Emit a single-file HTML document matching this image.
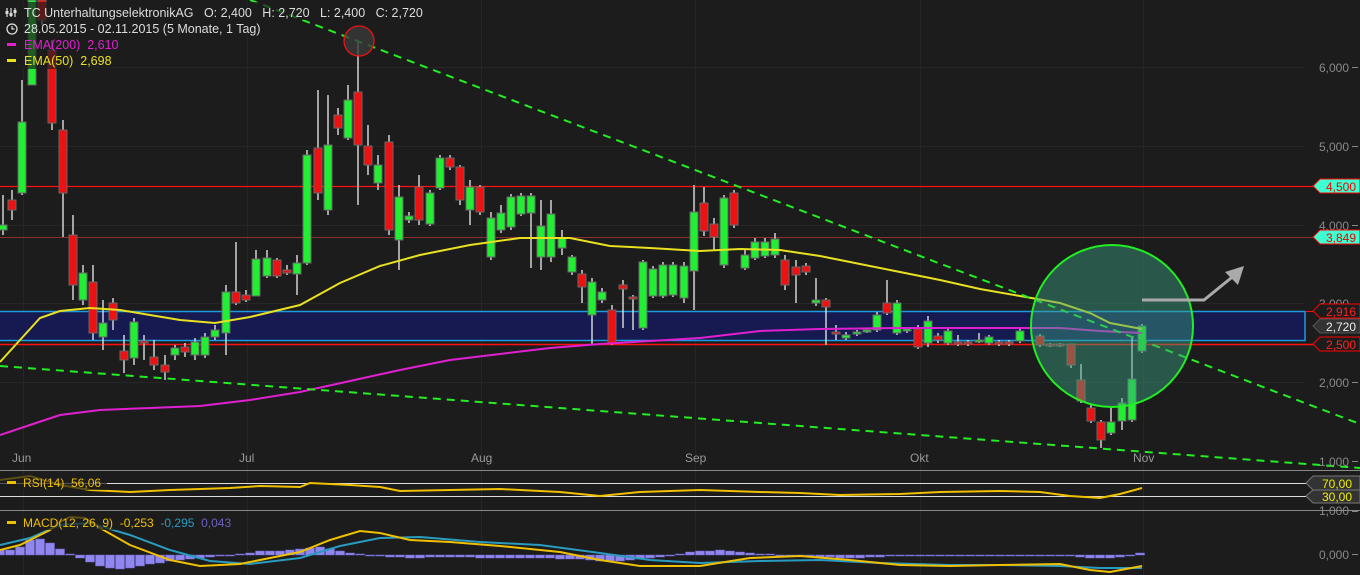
<!DOCTYPE html>
<html><head><meta charset="utf-8"><style>
html,body{margin:0;padding:0;background:#1c1c1c;width:1360px;height:575px;overflow:hidden}
svg{display:block;font-family:"Liberation Sans",sans-serif}
text{white-space:pre}
</style></head><body>
<svg id="s" width="1360" height="575" viewBox="0 0 1360 575" xmlns="http://www.w3.org/2000/svg" xml:space="preserve">
<rect width="1360" height="575" fill="#1c1c1c"/>
<g stroke="#262626" stroke-width="1">
<line x1="0" y1="67.5" x2="1305" y2="67.5"/><line x1="0" y1="146.5" x2="1305" y2="146.5"/><line x1="0" y1="225.5" x2="1305" y2="225.5"/><line x1="0" y1="303.5" x2="1305" y2="303.5"/><line x1="0" y1="382.5" x2="1305" y2="382.5"/>
<line x1="23.5" y1="0" x2="23.5" y2="575"/><line x1="247.5" y1="0" x2="247.5" y2="575"/><line x1="481.5" y1="0" x2="481.5" y2="575"/><line x1="695.5" y1="0" x2="695.5" y2="575"/><line x1="920.5" y1="0" x2="920.5" y2="575"/><line x1="1143.5" y1="0" x2="1143.5" y2="575"/>
</g>
<rect x="-1" y="311.5" width="1306" height="29" fill="#161a50" stroke="#1e9be0" stroke-width="1.5"/>
<line x1="0" y1="186.5" x2="1315" y2="186.5" stroke="#ff1010" stroke-width="1.2"/>
<line x1="0" y1="237.5" x2="1315" y2="237.5" stroke="#8a3030" stroke-width="1"/>
<line x1="0" y1="344.5" x2="1315" y2="344.5" stroke="#ff1010" stroke-width="1.5"/>
<line x1="1305" y1="311.5" x2="1315" y2="311.5" stroke="#ff1010"/>
<g id="candles"></g>
<polyline fill="none" stroke="#e8e020" stroke-width="2" points="0,362 20,340 40,318 60,311 90,308 120,310 150,315 180,320 215,323 250,317 300,305 340,283 380,266 420,255 470,245 520,238 570,238 610,246 650,248 700,251 740,249 780,250 820,256 860,264 900,272 940,280 980,289 1020,296 1060,303 1090,313 1110,323 1142,329"/>
<polyline fill="none" stroke="#e020d0" stroke-width="2" points="0,435 30,425 60,415 100,410 150,408 200,406 250,400 300,392 350,381 400,370 450,360 500,354 550,348 600,344 650,341 700,338 760,331 820,329 900,328 1000,328 1060,328 1100,331 1142,333"/>
<line x1="250" y1="0" x2="1360" y2="424" stroke="#22ee22" stroke-width="2" stroke-dasharray="8,6"/>
<line x1="0" y1="366" x2="1360" y2="468" stroke="#22ee22" stroke-width="2" stroke-dasharray="8,6"/>
<circle cx="359" cy="41" r="15" fill="#3a3a3a" fill-opacity="0.8" stroke="#ee1111" stroke-width="1.3"/>
<circle cx="1112" cy="326" r="81" fill="#3aa080" fill-opacity="0.45" stroke="#22ee22" stroke-width="2"/>
<polyline points="1142,300 1204,300 1236,274" fill="none" stroke="#aaa" stroke-width="3"/>
<polygon points="1244,266 1225,272 1238,285" fill="#aaa"/>
<g fill="#888" font-size="12" text-anchor="end">
<text x="1349" y="72">6,000</text><text x="1349" y="151">5,000</text><text x="1349" y="230">4,000</text><text x="1349" y="308">3,000</text><text x="1349" y="387">2,000</text><text x="1349" y="466">1,000</text>
<text x="1349" y="515">1,000</text><text x="1349" y="559">0,000</text>
</g>
<g stroke="#888"><line x1="1352" y1="67.5" x2="1358" y2="67.5"/><line x1="1352" y1="146.5" x2="1358" y2="146.5"/><line x1="1352" y1="225.5" x2="1358" y2="225.5"/><line x1="1352" y1="382.5" x2="1358" y2="382.5"/><line x1="1352" y1="461.5" x2="1358" y2="461.5"/><line x1="1352" y1="511.5" x2="1358" y2="511.5"/><line x1="1352" y1="554.5" x2="1358" y2="554.5"/></g>
<g fill="#999" font-size="12"><text x="12" y="462">Jun</text><text x="239" y="462">Jul</text><text x="471" y="462">Aug</text><text x="685" y="462">Sep</text><text x="910" y="462">Okt</text><text x="1133" y="462">Nov</text></g>
<g font-size="12" text-anchor="end">
<polygon points="1313,186 1320,179 1360,179 1360,193 1320,193" fill="#40ffd0" stroke="#f00"/><text x="1356" y="191" fill="#e00">4,500</text>
<polygon points="1313,237 1320,230 1360,230 1360,244 1320,244" fill="#40ffd0" stroke="#f00"/><text x="1356" y="242" fill="#e00">3,849</text>
<polygon points="1313,311 1320,304 1360,304 1360,318 1320,318" fill="#1c1c1c" stroke="#f00"/><text x="1356" y="316" fill="#f22">2,916</text>
<polygon points="1313,326 1320,319 1360,319 1360,333 1320,333" fill="#333" stroke="#555"/><text x="1356" y="331" fill="#eee">2,720</text>
<polygon points="1313,344 1320,337 1360,337 1360,351 1320,351" fill="#1c1c1c" stroke="#f00"/><text x="1356" y="349" fill="#f22">2,500</text>
</g>
<line x1="0" y1="470.5" x2="1360" y2="470.5" stroke="#888"/>
<line x1="0" y1="483.5" x2="1310" y2="483.5" stroke="#ddd"/>
<line x1="0" y1="496.5" x2="1310" y2="496.5" stroke="#ddd"/>
<line x1="0" y1="510.5" x2="1360" y2="510.5" stroke="#888"/>
<g font-size="12" text-anchor="end">
<polygon points="1306,483 1313,476 1360,476 1360,490 1313,490" fill="#333" stroke="#777"/><text x="1352" y="488" fill="#ee0">70,00</text>
<polygon points="1306,496 1313,490 1360,490 1360,503 1313,503" fill="#333" stroke="#777"/><text x="1352" y="501" fill="#ee0">30,00</text>
</g>
<polyline fill="none" stroke="#f0c000" stroke-width="2" points="0,480 30,476 60,485 90,490 130,492 170,490 230,488 260,486 300,487 310,483 350,485 380,487 400,491 450,490 500,489 560,492 600,496 640,492 700,490 760,492 800,493 840,495 900,494 940,492 1000,491 1040,492 1070,496 1100,498 1120,494 1142,488"/>
<g id="hist" fill="#8f86ee" stroke="#6c64c8" stroke-width="0.5"></g>
<polyline fill="none" stroke="#2a9bc0" stroke-width="2" points="0,545 30,538 60,525 90,523 130,535 170,550 210,561 250,564 300,558 340,546 380,538 420,537 480,542 540,545 600,553 650,560 700,563 760,561 820,560 880,563 950,565 1000,565 1060,566 1100,568 1142,568"/>
<polyline fill="none" stroke="#f0c000" stroke-width="2" points="0,550 20,545 40,535 50,530 60,522 70,517 85,518 100,528 130,545 170,560 200,566 240,564 270,558 300,552 330,540 360,531 380,533 410,540 450,542 500,546 560,552 600,560 640,566 700,566 750,558 800,556 850,560 900,565 950,566 1000,565 1060,564 1090,570 1110,572 1142,566"/>
<rect x="0" y="2" width="405" height="18" fill="#1c1c1c" fill-opacity="0.7"/>
<rect x="0" y="20" width="255" height="17" fill="#1c1c1c" fill-opacity="0.7"/>
<rect x="0" y="37" width="118" height="16" fill="#1c1c1c" fill-opacity="0.7"/>
<rect x="0" y="53" width="110" height="16" fill="#1c1c1c" fill-opacity="0.7"/>
<g stroke="#ddd" stroke-width="1.2"><line x1="7" y1="8" x2="7" y2="17"/><line x1="11" y1="8" x2="11" y2="17"/><line x1="15" y1="8" x2="15" y2="17"/></g>
<g fill="#ddd"><rect x="5.5" y="11" width="3" height="3"/><rect x="9.5" y="13" width="3" height="3"/><rect x="13.5" y="10" width="3" height="3"/></g>
<text x="24" y="17" fill="#ddd" font-size="12.5">TC UnterhaltungselektronikAG   O: 2,400   H: 2,720   L: 2,400   C: 2,720</text>
<circle cx="12" cy="29" r="5" fill="none" stroke="#ddd" stroke-width="1.3"/><path d="M12 26 V29 H14.5" fill="none" stroke="#ddd" stroke-width="1.2"/>
<text x="24" y="33" fill="#ddd" font-size="12.5">28.05.2015 - 02.11.2015 (5 Monate, 1 Tag)</text>
<rect x="7" y="43" width="9" height="3" fill="#e020d0"/><text x="24" y="49" fill="#e020d0" font-size="12.5">EMA(200)  2,610</text>
<rect x="7" y="59" width="9" height="3" fill="#e8e020"/><text x="24" y="65" fill="#e8e020" font-size="12.5">EMA(50)  2,698</text>
<rect x="0" y="475" width="107" height="15" fill="#1c1c1c" fill-opacity="0.7"/>
<rect x="7" y="481" width="9" height="3" fill="#f0c000"/><text x="23" y="487" fill="#f0c000" font-size="12">RSI(14)  56,06</text>
<rect x="0" y="514" width="236" height="16" fill="#1c1c1c" fill-opacity="0.7"/>
<rect x="7" y="521" width="9" height="3" fill="#f0c000"/><text x="23" y="527" font-size="12"><tspan fill="#f0c000">MACD(12, 26, 9)  -0,253  </tspan><tspan fill="#2a9bc0">-0,295  </tspan><tspan fill="#6a62c0">0,043</tspan></text>
</svg>
<script>
var C=[[3,230,225,195,235],[12,200,210,190,220],[22,193,122,80,195],[32,85,0,0,85],[42,0,20,0,25],[52,50,123,40,130],[63,130,193,120,237],[73,235,285,215,300],[83,300,273,265,305],[93,282,333,265,340],[103,337,323,300,350],[113,303,320,298,330],[124,351,360,335,373],[134,358,322,318,365],[144,341,343,335,360],[154,357,365,340,370],[165,365,372,355,380],[175,355,348,345,360],[185,347,352,343,357],[195,355,342,338,360],[205,355,337,333,358],[215,337,330,325,340],[226,333,292,285,355],[236,292,303,242,305],[246,295,300,290,302],[256,296,259,250,296],[267,276,258,250,278],[277,260,276,258,278],[287,270,273,265,275],[297,274,263,255,295],[307,263,155,150,265],[318,148,193,90,200],[328,210,145,95,215],[338,115,128,108,135],[348,138,100,85,140],[358,92,145,42,205],[368,146,165,125,175],[378,183,165,155,190],[389,142,230,135,235],[399,240,197,185,270],[409,220,216,212,223],[419,187,220,175,225],[430,224,193,190,226],[440,188,158,155,190],[450,158,167,155,170],[460,167,200,165,205],[470,210,187,180,225],[480,187,212,185,215],[491,257,218,212,260],[501,230,213,205,233],[511,227,197,194,230],[521,214,196,193,216],[531,213,196,193,268],[541,257,226,200,270],[551,257,214,200,262],[562,248,238,230,255],[572,272,257,255,275],[582,274,287,270,303],[592,315,282,278,345],[602,300,292,288,303],[612,310,343,305,345],[623,285,289,280,328],[633,297,299,295,330],[643,328,262,260,330],[653,296,269,266,298],[663,296,265,262,298],[673,295,265,262,297],[684,298,266,262,303],[694,271,212,185,310],[704,203,231,187,236],[714,224,237,218,250],[724,265,198,195,268],[734,193,225,190,228],[745,268,255,250,270],[755,258,242,238,260],[765,256,242,238,258],[775,255,239,233,258],[785,260,285,255,290],[796,267,275,260,303],[806,266,272,263,275],[816,303,300,278,306],[826,300,307,298,345],[836,332,334,325,340],[846,338,335,332,340],[857,333,332,330,336],[867,331,330,328,333],[877,330,315,312,332],[887,303,313,280,315],[897,333,303,300,335],[907,331,329,327,333],[918,329,347,325,349],[928,343,321,316,347],[938,336,340,333,343],[948,343,331,329,345],[958,342,344,335,346],[968,342,344,340,346],[979,341,340,333,343],[989,343,337,335,345],[999,342,344,340,346],[1009,342,344,340,346],[1020,341,331,329,343],[1040,336,345,334,347],[1050,344,346,343,347],[1060,344,346,343,347],[1071,344,365,344,368],[1081,380,401,364,403],[1091,408,421,405,423],[1101,422,440,420,448],[1111,433,422,408,435],[1122,421,403,398,430],[1132,420,379,338,422],[1142,351,326,324,353]];
var g=document.getElementById('candles'),h='';
C.forEach(function(c){var x=c[0],o=c[1],cl=c[2],hi=c[3],lo=c[4];var up=cl<o;var t=Math.min(o,cl),b=Math.max(o,cl);if(b-t<2)b=t+2;
h+='<line x1="'+x+'" y1="'+hi+'" x2="'+x+'" y2="'+lo+'" stroke="#eee" stroke-width="1.3"/>';
h+='<rect x="'+(x-4)+'" y="'+t+'" width="8" height="'+(b-t)+'" fill="'+(up?'#22ee33':'#ee1111')+'" stroke="#666" stroke-width="1"/>';});
g.innerHTML=h;
var H=[[0,550],[10,550],[20,547],[30,540],[40,539],[50,543],[60,549],[70,554],[80,558],[90,562],[100,566],[110,568],[120,569],[130,568],[140,566],[150,564],[160,563],[170,561],[180,560],[190,559],[200,558],[210,557],[220,556],[230,556],[240,554],[250,553],[260,551],[270,551],[280,551],[290,550],[300,549],[310,548],[320,547],[330,549],[340,551],[350,553],[360,554],[370,555],[380,556],[390,557],[400,557],[410,558],[420,558],[430,557],[440,557],[450,557],[460,557],[470,557],[480,558],[490,558],[500,558],[510,558],[520,558],[530,558],[540,558],[550,558],[560,559],[570,559],[580,559],[590,560],[600,561],[610,561],[620,561],[630,560],[640,559],[650,558],[660,557],[670,556],[680,554],[690,552],[700,551],[710,551],[720,550],[730,551],[740,552],[750,553],[760,554],[770,554],[780,555],[790,556],[800,556],[810,556],[820,557],[830,557],[840,558],[850,558],[860,558],[870,557],[880,557],[890,556],[900,556],[910,556],[920,556],[930,556],[940,556],[950,556],[960,556],[970,556],[980,556],[990,556],[1000,556],[1010,556],[1020,556],[1030,556],[1040,556],[1050,556],[1060,556],[1070,556],[1080,557],[1090,558],[1100,558],[1110,558],[1120,557],[1130,556],[1140,553]];
var hh='';H.forEach(function(b){var y=b[1],z=555;hh+='<rect x="'+(b[0]-4.5)+'" y="'+Math.min(y,z)+'" width="9" height="'+Math.max(1,Math.abs(y-z))+'"/>';});
document.getElementById('hist').innerHTML=hh;
</script>
</body></html>
